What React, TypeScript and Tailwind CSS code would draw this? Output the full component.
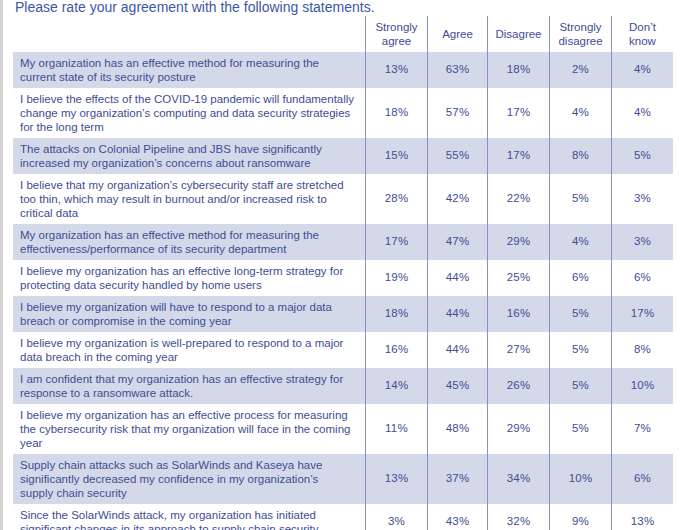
import React from "react";

type Row = { lines: string[]; v: string[] };

const rows: Row[] = [
  { lines: ["My organization has an effective method for measuring the", "current state of its security posture"], v: ["13%", "63%", "18%", "2%", "4%"] },
  { lines: ["I believe the effects of the COVID-19 pandemic will fundamentally", "change my organization\u2019s computing and data security strategies", "for the long term"], v: ["18%", "57%", "17%", "4%", "4%"] },
  { lines: ["The attacks on Colonial Pipeline and JBS have significantly", "increased my organization\u2019s concerns about ransomware"], v: ["15%", "55%", "17%", "8%", "5%"] },
  { lines: ["I believe that my organization\u2019s cybersecurity staff are stretched", "too thin, which may result in burnout and/or increased risk to", "critical data"], v: ["28%", "42%", "22%", "5%", "3%"] },
  { lines: ["My organization has an effective method for measuring the", "effectiveness/performance of its security department"], v: ["17%", "47%", "29%", "4%", "3%"] },
  { lines: ["I believe my organization has an effective long-term strategy for", "protecting data security handled by home users"], v: ["19%", "44%", "25%", "6%", "6%"] },
  { lines: ["I believe my organization will have to respond to a major data", "breach or compromise in the coming year"], v: ["18%", "44%", "16%", "5%", "17%"] },
  { lines: ["I believe my organization is well-prepared to respond to a major", "data breach in the coming year"], v: ["16%", "44%", "27%", "5%", "8%"] },
  { lines: ["I am confident that my organization has an effective strategy for", "response to a ransomware attack."], v: ["14%", "45%", "26%", "5%", "10%"] },
  { lines: ["I believe my organization has an effective process for measuring", "the cybersecurity risk that my organization will face in the coming", "year"], v: ["11%", "48%", "29%", "5%", "7%"] },
  { lines: ["Supply chain attacks such as SolarWinds and Kaseya have", "significantly decreased my confidence in my organization\u2019s", "supply chain security"], v: ["13%", "37%", "34%", "10%", "6%"] },
  { lines: ["Since the SolarWinds attack, my organization has initiated", "significant changes in its approach to supply chain security"], v: ["3%", "43%", "32%", "9%", "13%"] },
];

const headers = ["Strongly agree", "Agree", "Disagree", "Strongly disagree", "Don\u2019t know"];
const colW = ["w-[62px]", "w-[60px]", "w-[62px]", "w-[62px]", "w-[62px]"];

export default function App() {
  return (
    <div
      className="w-[681px] h-[530px] overflow-hidden bg-white border-l-[3px] border-[#d2d2d2] text-[#404d93]"
      style={{ fontFamily: '"Liberation Sans", Arial, sans-serif' }}
    >
      <div className="pl-[12px] text-[14px] leading-[14px] text-[#3b58a3]">
        Please rate your agreement with the following statements.
      </div>
      <div className="pl-[10px] pt-[2px]">
        <div className="flex h-[36px]">
          <div className="w-[352px]" />
          {headers.map((h, i) => (
            <div
              key={h}
              className={`${colW[i]} border-l border-[#8890c0] flex items-center justify-center text-center text-[11.5px] leading-[14px] px-[6px]`}
            >
              {h}
            </div>
          ))}
        </div>
        {rows.map((r, idx) => (
          <div key={idx} className={`flex w-[660px] ${idx % 2 === 0 ? "bg-[#d4d9ea]" : "bg-white"}`}>
            <div className="w-[352px] pl-[7px] py-[4px] text-[11.5px] leading-[14px] whitespace-nowrap">
              {r.lines.map((l, j) => (
                <div key={j}>{l}</div>
              ))}
            </div>
            {r.v.map((v, i) => (
              <div
                key={i}
                className={`${colW[i]} border-l border-[#8890c0] flex items-center justify-center text-[11.5px] tracking-[0.2px]`}
              >
                {v}
              </div>
            ))}
          </div>
        ))}
      </div>
    </div>
  );
}
